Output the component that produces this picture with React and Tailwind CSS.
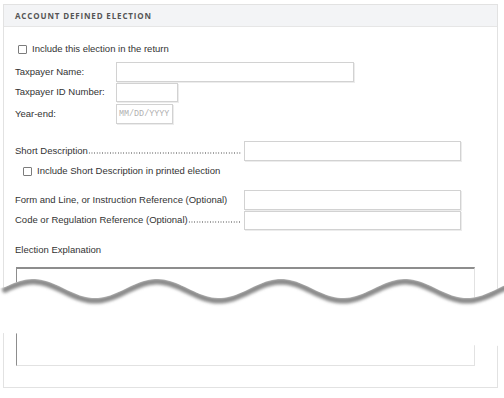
const label = "font-['Liberation_Sans',Arial,sans-serif] text-[9.5px] text-[#333]";
const inputCls = "bg-white border border-[#d2d2d2] shadow-[1px_1px_0_#ececec]";

const wave = (x) => 288.5 - 9.5 * Math.cos((2 * Math.PI * (x - 33)) / 124);

function TornEdge() {
  const pts = [];
  for (let x = 5; x <= 506; x += 3) pts.push([x, wave(x)]);
  const line = pts.map(([x, y], i) => `${i ? "L" : "M"}${x} ${y.toFixed(1)}`).join(" ");
  const fill = `${line} L506 346 L0 333 L0 ${(wave(5) + 1).toFixed(1)} Z`;
  const shade = pts.map(([x, y], i) => `${i ? "L" : "M"}${x} ${(y + 2.6).toFixed(1)}`).join(" ");

  return (
    <svg className="absolute left-0 top-0 pointer-events-none" width="504" height="398" viewBox="0 0 504 398">
      <defs>
        <clipPath id="tear">
          <path d={fill} />
        </clipPath>
        <filter id="soft" x="-5%" y="-50%" width="110%" height="200%">
          <feGaussianBlur stdDeviation="1.6" />
        </filter>
      </defs>
      <path d={fill} fill="#fff" />
      <g clipPath="url(#tear)">
        <path d={shade} fill="none" stroke="#8a8a8a" strokeWidth="6" strokeLinecap="round" filter="url(#soft)" />
      </g>
    </svg>
  );
}

function Check({ children, indent }) {
  return (
    <div className={`flex items-center h-[12px] ${indent}`}>
      <span className="w-[9px] h-[9px] border border-[#7c7c7c] rounded-[1px] bg-white shrink-0" />
      <span className={`ml-[5px] ${label}`}>{children}</span>
    </div>
  );
}

// label followed by a dot leader up to the input
function Dotted({ children }) {
  return (
    <div className={`w-[229px] flex items-baseline ${label}`}>
      <span className="shrink-0">{children}</span>
      <span className="flex-1 mr-[3px] h-[2px] bg-[radial-gradient(circle,#9a9a9a_0.6px,transparent_0.8px)] bg-[length:2.65px_2px]" />
    </div>
  );
}

export default function App() {
  return (
    <div className="relative w-[504px] h-[398px] bg-white overflow-hidden">
      <div className="ml-[3px] mt-[4px] w-[495px] h-[384px] border border-[#e2e2e2]">
        {/* Header */}
        <div className="h-[22px] bg-[#f3f4f6] border-b border-[#e6e6e6] flex items-center pl-[11px]">
          <span className="font-['Open_Sans',sans-serif] font-bold text-[8px] tracking-[0.85px] text-[#555]">
            ACCOUNT DEFINED ELECTION
          </span>
        </div>

        <div className="pl-[11px]">
          <div className="mt-[16px]">
            <Check indent="ml-[3px]">Include this election in the return</Check>
          </div>

          <div className="mt-[7px] flex items-center h-[20px]">
            <div className={`w-[101px] ${label}`}>Taxpayer Name:</div>
            <div className={`w-[238px] h-[20px] ${inputCls}`} />
          </div>
          <div className="mt-[1px] flex items-center h-[19px]">
            <div className={`w-[101px] ${label}`}>Taxpayer ID Number:</div>
            <div className={`w-[62px] h-[19px] ${inputCls}`} />
          </div>
          <div className="mt-[2px] flex items-center h-[20px]">
            <div className={`w-[101px] ${label}`}>Year-end:</div>
            <div className={`w-[57px] h-[20px] flex items-center pl-[2px] ${inputCls}`}>
              <span className="font-['Liberation_Mono','Courier_New',monospace] text-[8.4px] text-[#b0b0b0] leading-none">
                MM/DD/YYYY
              </span>
            </div>
          </div>

          <div className="mt-[17px] flex items-center h-[20px]">
            <Dotted>Short Description</Dotted>
            <div className={`w-[217px] h-[20px] ${inputCls}`} />
          </div>
          <div className="mt-[4px]">
            <Check indent="ml-[8px]">Include Short Description in printed election</Check>
          </div>

          <div className="mt-[13px] flex items-center h-[20px]">
            <div className={`w-[229px] ${label}`}>Form and Line, or Instruction Reference (Optional)</div>
            <div className={`w-[217px] h-[20px] ${inputCls}`} />
          </div>
          <div className="mt-[1px] flex items-center h-[19px]">
            <Dotted>Code or Regulation Reference (Optional)</Dotted>
            <div className={`w-[217px] h-[19px] ${inputCls}`} />
          </div>

          <div className={`mt-[14px] h-[12px] flex items-center ${label}`}>Election Explanation</div>

          <div className="mt-[11px] ml-[1px] w-[459px] h-[99px] bg-white border-t-2 border-l border-t-[#8d8d8d] border-l-[#8d8d8d] border-r border-b border-r-[#e2e2e2] border-b-[#e2e2e2]" />
        </div>
      </div>

      <TornEdge />
    </div>
  );
}
